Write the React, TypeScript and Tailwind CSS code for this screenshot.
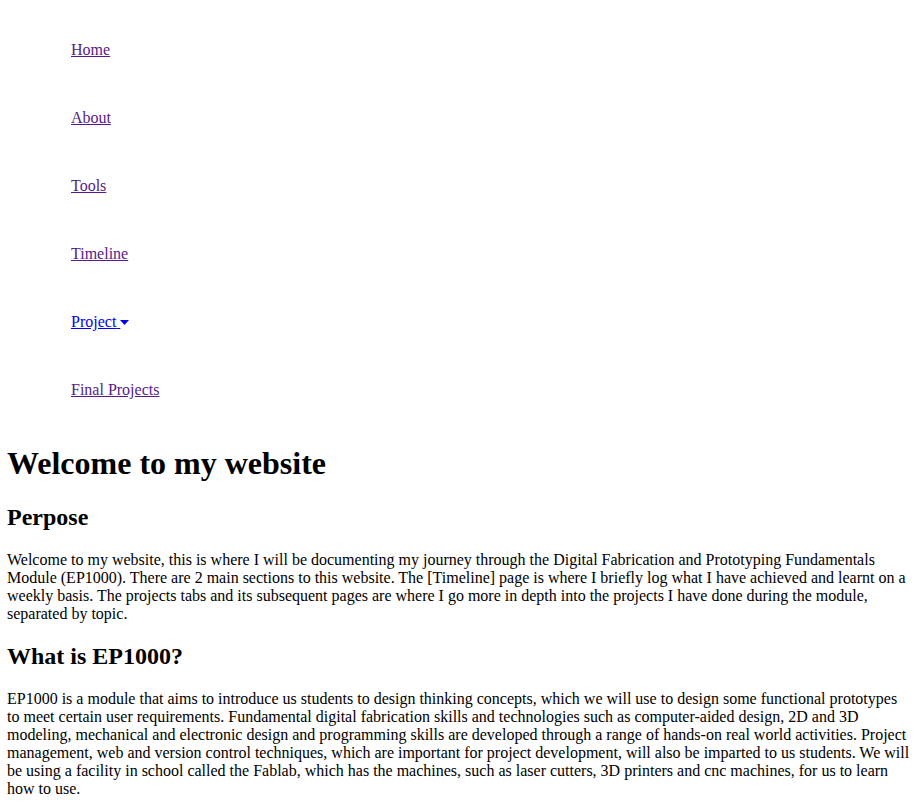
import React from "react";

const visited = "text-[#551a8b] underline";
const unvisited = "text-[#0000ee] underline";

export default function App() {
  const items = [
    { label: "Home", cls: visited },
    { label: "About", cls: visited },
    { label: "Tools", cls: visited },
    { label: "Timeline", cls: visited },
    { label: "Project", cls: unvisited, caret: true },
    { label: "Final Projects", cls: visited },
  ];
  return (
    <div className="pl-[7px] pr-2 font-['Liberation_Serif','Times_New_Roman',serif] text-base leading-[normal] text-black bg-white min-h-[802px]">
      <ul className="list-none mt-4 mb-4 pl-[64px]">
        {items.map((it) => (
          <li key={it.label} className="py-[25px] leading-[18px]">
            <a href="#" className={it.cls}>
              {it.label}
              {it.caret ? " " : ""}
              {it.caret && (
                <svg
                  className="inline-block align-baseline"
                  width="9"
                  height="5"
                  viewBox="0 0 9 5"
                  style={{ marginBottom: 2 }}
                >
                  <polygon points="0,0 9,0 4.5,5" fill="#0000ee" />
                </svg>
              )}
            </a>
          </li>
        ))}
      </ul>
      <h1 className="text-[32px] font-bold my-[21.44px] leading-[normal]">Welcome to my website</h1>
      <h2 className="text-[24px] font-bold my-[19.92px] leading-[normal]">Perpose</h2>
      <p className="my-4">
        Welcome to my website, this is where I will be documenting my journey through the Digital Fabrication and
        Prototyping Fundamentals Module (EP1000). There are 2 main sections to this website. The [Timeline] page is
        where I briefly log what I have achieved and learnt on a weekly basis. The projects tabs and its subsequent
        pages are where I go more in depth into the projects I have done during the module, separated by topic.
      </p>
      <h2 className="text-[24px] font-bold my-[19.92px] leading-[normal]">What is EP1000?</h2>
      <p className="my-4">
        EP1000 is a module that aims to introduce us students to design thinking concepts, which we will use to design
        some functional prototypes to meet certain user requirements. Fundamental digital fabrication skills and
        technologies such as computer-aided design, 2D and 3D modeling, mechanical and electronic design and
        programming skills are developed through a range of hands-on real world activities. Project management, web
        and version control techniques, which are important for project development, will also be imparted to us
        students. We will be using a facility in school called the Fablab, which has the machines, such as laser
        cutters, 3D printers and cnc machines, for us to learn how to use.
      </p>
    </div>
  );
}
